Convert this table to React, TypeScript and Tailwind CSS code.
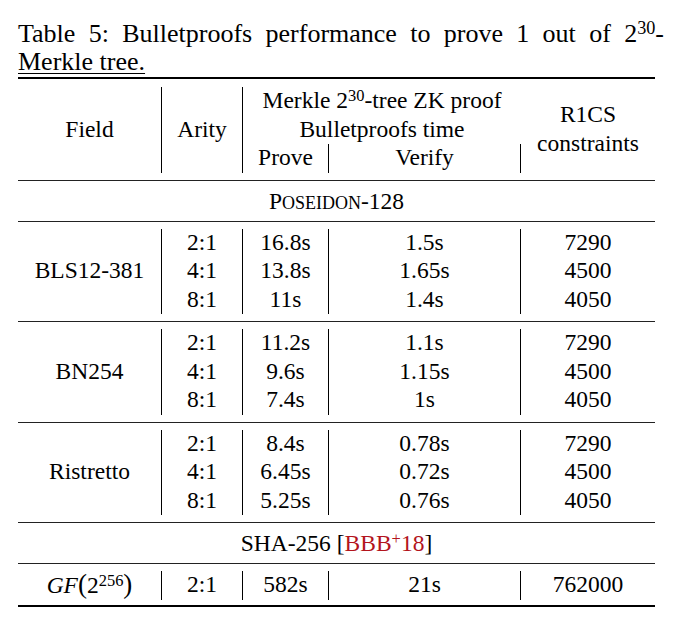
const groups = [
  {
    field: 'BLS12-381',
    rows: [
      ['2:1', '16.8s', '1.5s', '7290'],
      ['4:1', '13.8s', '1.65s', '4500'],
      ['8:1', '11s', '1.4s', '4050'],
    ],
  },
  {
    field: 'BN254',
    rows: [
      ['2:1', '11.2s', '1.1s', '7290'],
      ['4:1', '9.6s', '1.15s', '4500'],
      ['8:1', '7.4s', '1s', '4050'],
    ],
  },
  {
    field: 'Ristretto',
    rows: [
      ['2:1', '8.4s', '0.78s', '7290'],
      ['4:1', '6.45s', '0.72s', '4500'],
      ['8:1', '5.25s', '0.76s', '4050'],
    ],
  },
];

type Kids = { children?: React.ReactNode };

function Sup({ children }: Kids) {
  return <span className="relative -top-[0.42em] text-[0.7em] leading-none">{children}</span>;
}

function Cell({ children }: Kids) {
  return <div className="h-[28.5px] leading-[26px] text-center whitespace-nowrap">{children}</div>;
}

function Rule({ thick }: { thick?: boolean }) {
  return <div className={thick ? 'h-[2px] bg-black' : 'h-px bg-[#222]'} />;
}

function Group({ field, rows }: { field: string; rows: string[][] }) {
  return (
    <div className="flex pt-[7px] pb-[7px]">
      <div className="w-[143px] flex flex-col justify-center">
        <Cell>{field}</Cell>
      </div>
      <div className="w-[81px] border-l border-black">
        {rows.map((r, i) => (
          <Cell key={i}>{r[0]}</Cell>
        ))}
      </div>
      <div className="w-[86px] border-l border-black">
        {rows.map((r, i) => (
          <Cell key={i}>{r[1]}</Cell>
        ))}
      </div>
      <div className="w-[193px] border-x border-black">
        {rows.map((r, i) => (
          <Cell key={i}>{r[2]}</Cell>
        ))}
      </div>
      <div className="flex-1">
        {rows.map((r, i) => (
          <Cell key={i}>{r[3]}</Cell>
        ))}
      </div>
    </div>
  );
}

function SpanRow({ children }: Kids) {
  return (
    <div className="pt-[7px] pb-[4.5px]">
      <Cell>{children}</Cell>
    </div>
  );
}

export default function App() {
  return (
    <div className="font-[Liberation_Serif] w-[683px] min-h-[626px] bg-white text-black pl-[18px] pt-[20px]">
      <div className="w-[646px] text-[26px] leading-[28px]">
        <div className="text-justify [text-align-last:justify]">
          Table 5: Bulletproofs performance to prove 1 out of 2<Sup>30</Sup>-
        </div>
        <div>
          <span className="underline decoration-1 underline-offset-[3px]">Merkle tree.</span>
        </div>
      </div>

      <div className="w-[637px] mt-[1px] text-[23.5px]">
        <Rule thick />

        <div className="flex pt-[8px] pb-[7px]">
          <div className="w-[143px] flex flex-col justify-center">
            <Cell>Field</Cell>
          </div>
          <div className="w-[81px] border-l border-black flex flex-col justify-center">
            <Cell>Arity</Cell>
          </div>
          <div className="w-[279px] border-l border-black">
            <Cell>
              Merkle 2<Sup>30</Sup>-tree ZK proof
            </Cell>
            <Cell>Bulletproofs time</Cell>
            <div className="flex">
              <div className="w-[85px]">
                <Cell>Prove</Cell>
              </div>
              <div className="w-[193px] border-x border-black">
                <Cell>Verify</Cell>
              </div>
            </div>
          </div>
          <div className="flex-1 flex flex-col justify-center">
            <Cell>R1CS</Cell>
            <Cell>constraints</Cell>
          </div>
        </div>

        <Rule />
        <SpanRow>
          P<span className="text-[18px]">OSEIDON</span>-128
        </SpanRow>
        <Rule />

        {groups.map((g) => (
          <div key={g.field}>
            <Group field={g.field} rows={g.rows} />
            <Rule />
          </div>
        ))}

        <SpanRow>
          SHA-256 [
          <span className="text-[#b3141c]">
            BBB<Sup>+</Sup>18
          </span>
          ]
        </SpanRow>
        <Rule />

        <div className="flex pt-[7px] pb-[5.5px]">
          <div className="w-[143px]">
            <Cell>
              <span className="italic">GF</span>
              <span className="text-[27px] leading-none">(</span>2<Sup>256</Sup>
              <span className="text-[27px] leading-none">)</span>
            </Cell>
          </div>
          <div className="w-[81px] border-l border-black">
            <Cell>2:1</Cell>
          </div>
          <div className="w-[86px] border-l border-black">
            <Cell>582s</Cell>
          </div>
          <div className="w-[193px] border-x border-black">
            <Cell>21s</Cell>
          </div>
          <div className="flex-1">
            <Cell>762000</Cell>
          </div>
        </div>

        <Rule thick />
      </div>
    </div>
  );
}
